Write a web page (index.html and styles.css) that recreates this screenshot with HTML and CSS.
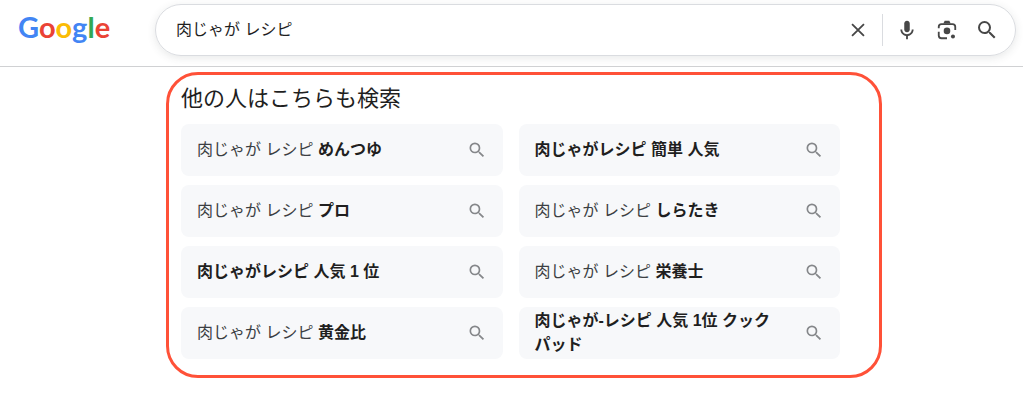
FILE: index.html
```html
<!DOCTYPE html>
<html lang="ja">
  <head>
    <meta charset="UTF-8" />
    <meta name="viewport" content="width=device-width, initial-scale=1.0" />
    <title>肉じゃが レシピ - Google 検索</title>
    <link rel="stylesheet" href="styles.css" />
  </head>
  <body>
    <svg class="sprite" aria-hidden="true">
      <symbol id="search" viewBox="0 0 24 24">
        <path
          d="M15.5 14h-.79l-.28-.27A6.47 6.47 0 0 0 16 9.5 6.5 6.5 0 1 0 9.5 16c1.61 0 3.09-.59 4.23-1.57l.27.28v.79l5 4.99L20.49 19l-4.99-5zm-6 0C7.01 14 5 11.99 5 9.5S7.01 5 9.5 5 14 7.01 14 9.5 11.99 14 9.5 14z"
        />
      </symbol>
    </svg>

    <header class="header">
      <a class="logo" href="#" aria-label="Google"
        ><span class="blue">G</span><span class="red">o</span
        ><span class="yellow">o</span><span class="blue">g</span
        ><span class="green">l</span><span class="red">e</span></a
      >
      <form class="searchbox" role="search">
        <input class="query" type="text" aria-label="検索" value="肉じゃが レシピ" />
        <button class="tool clear" type="reset" aria-label="クリア">
          <svg viewBox="0 0 24 24">
            <path class="line" d="M5.500 5.500l13 13M18.500 5.500l-13 13" />
          </svg>
        </button>
        <button class="tool" type="button" aria-label="音声検索">
          <svg viewBox="0 0 24 24">
            <path
              d="M12 14.500c1.700 0 3-1.300 3-3V5c0-1.700-1.300-3-3-3S9 3.300 9 5v6.500c0 1.700 1.300 3 3 3z"
            />
            <path
              d="M17.200 11.500c0 2.900-2.300 5.100-5.200 5.100s-5.200-2.200-5.200-5.100H4.800c0 3.600 2.700 6.600 6.200 7.100V22h2v-3.400c3.500-.5 6.200-3.500 6.200-7.100z"
            />
          </svg>
        </button>
        <button class="tool" type="button" aria-label="画像で検索">
          <svg viewBox="0 0 24 24">
            <path
              class="line"
              d="M3 10V8.500a3 3 0 0 1 3-3h12a3 3 0 0 1 3 3V12M3 14v4a3 3 0 0 0 3 3h6"
            />
            <path d="M8 5l1.500-3h5L16 5z" />
            <circle cx="12" cy="13" r="3.600" />
            <circle cx="18.500" cy="19" r="2.200" />
          </svg>
        </button>
        <button class="tool submit" type="submit" aria-label="検索">
          <svg><use href="#search" /></svg>
        </button>
      </form>
    </header>

    <main class="related">
      <h1 class="title">他の人はこちらも検索</h1>
      <nav class="grid">
        <a class="item" href="#">
          <span class="text">肉じゃが レシピ <b>めんつゆ</b></span>
          <svg class="icon"><use href="#search" /></svg>
        </a>
        <a class="item" href="#">
          <span class="text"><b>肉じゃがレシピ 簡単 人気</b></span>
          <svg class="icon"><use href="#search" /></svg>
        </a>
        <a class="item" href="#">
          <span class="text">肉じゃが レシピ <b>プロ</b></span>
          <svg class="icon"><use href="#search" /></svg>
        </a>
        <a class="item" href="#">
          <span class="text">肉じゃが レシピ <b>しらたき</b></span>
          <svg class="icon"><use href="#search" /></svg>
        </a>
        <a class="item" href="#">
          <span class="text"><b>肉じゃがレシピ 人気 1 位</b></span>
          <svg class="icon"><use href="#search" /></svg>
        </a>
        <a class="item" href="#">
          <span class="text">肉じゃが レシピ <b>栄養士</b></span>
          <svg class="icon"><use href="#search" /></svg>
        </a>
        <a class="item" href="#">
          <span class="text">肉じゃが レシピ <b>黄金比</b></span>
          <svg class="icon"><use href="#search" /></svg>
        </a>
        <a class="item" href="#">
          <span class="text"><b>肉じゃが-レシピ 人気 1位 クックパッド</b></span>
          <svg class="icon"><use href="#search" /></svg>
        </a>
      </nav>
    </main>
  </body>
</html>
```

FILE: styles.css
```css
* {
  box-sizing: border-box;
}

body {
  margin: 0;
  background-color: white;
  color: #1f1f1f;
  font-family: "Liberation Sans", "Noto Sans CJK JP", sans-serif;
  font-size: 16px;
}

.sprite {
  display: none;
}

svg {
  display: block;
  fill: currentColor;
}

.header {
  display: flex;
  align-items: flex-start;
  padding: 4px 7px 10px 18px;
  border-bottom: 1px solid #d0d1d3;
}

.logo {
  flex: none;
  width: 137px;
  padding-top: 3px;
  font-family: Lato, sans-serif;
  font-size: 29px;
  font-weight: bold;
  line-height: 40px;
  text-decoration: none;
}
.blue {
  color: #4285f4;
}
.red {
  color: #ea4335;
}
.yellow {
  color: #fbbc05;
}
.green {
  color: #34a853;
}

.searchbox {
  display: flex;
  flex: 1;
  align-items: center;
  height: 52px;
  padding: 0 8px 0 20px;
  border: 1px solid #dadce0;
  border-radius: 26px;
  box-shadow: 0 2px 8px rgba(60, 64, 67, 0.12);
}

.query {
  flex: 1;
  min-width: 0;
  padding: 0 0 4px;
  border: none;
  outline: none;
  background: none;
  color: #1f1f1f;
  font: inherit;
}

.tool {
  display: flex;
  justify-content: center;
  width: 40px;
  padding: 0;
  border: none;
  background: none;
  color: #474747;
  cursor: pointer;
}
.tool svg {
  width: 22px;
  height: 22px;
}
.clear {
  align-items: center;
  width: 45px;
  height: 32px;
  margin-right: 4px;
  padding-right: 4px;
  border-right: 1px solid #dadce0;
}
.submit svg {
  width: 24px;
  height: 24px;
}
.line {
  fill: none;
  stroke: currentColor;
  stroke-width: 2;
}

.related {
  max-width: 716px;
  margin: 5px 16px 20px 166px;
  padding: 10px 39px 16px 12px;
  border: 3px solid #ff5138;
  border-radius: 32px;
}

.title {
  margin: 0 0 11px;
  font-size: 22px;
  font-weight: normal;
  line-height: 28px;
}

.grid {
  display: grid;
  grid-template-columns: 1fr 1fr;
  gap: 9px 16px;
}

.item {
  display: flex;
  align-items: center;
  gap: 20px;
  min-height: 52px;
  padding: 2px 16px;
  border-radius: 8px;
  background-color: #f7f8fa;
  color: #3c3f43;
  line-height: 24px;
  text-decoration: none;
}
.item:hover {
  background-color: #eceef1;
}

.text {
  flex: 1;
}
.text b {
  color: #1f1f1f;
}

.icon {
  flex: none;
  width: 20px;
  height: 20px;
  color: #85878a;
}
```
